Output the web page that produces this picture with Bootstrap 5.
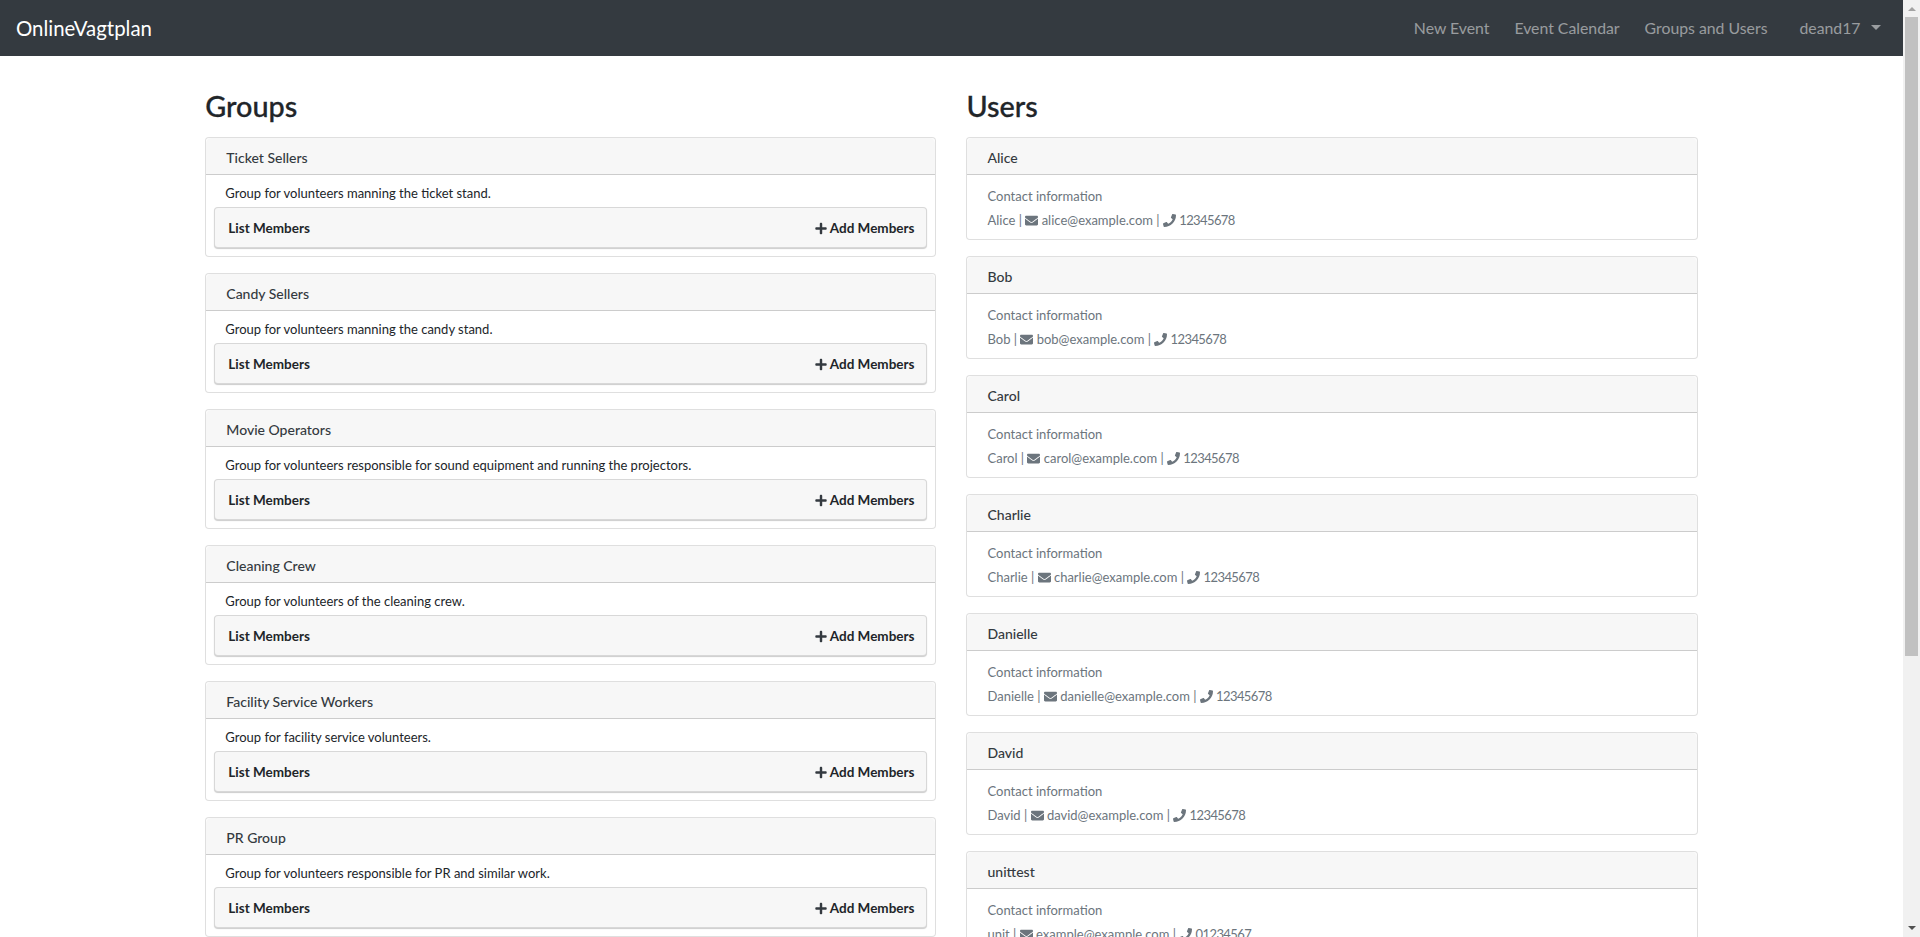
<!DOCTYPE html>
<html lang="en">
<head>
  <meta charset="UTF-8" />
  <meta name="viewport" content="width=device-width, initial-scale=1" />
  <title>OnlineVagtplan - Groups and Users</title>
  <link href="https://cdn.jsdelivr.net/npm/bootstrap@5.3.0/dist/css/bootstrap.min.css" rel="stylesheet" />
  <style>
    body { font-family: "Lato", "Liberation Sans", sans-serif; font-size: 13px; color: #212529; margin-right: 17px; }
    .top-bar { background: #343a40; height: 56px; padding: 0 10px 0 16px; }
    .top-bar .navbar-brand { font-size: 20.4px; color: #fff; padding: 0; margin: 0; }
    .top-bar .navbar-nav .nav-link { font-size: 15.8px; color: rgba(255,255,255,.5); padding: 8px 12.5px; }
    .top-bar .user-menu { margin-left: 7px; }
    .top-bar .user-menu .nav-link { padding-right: 12px; }
    .top-bar .dropdown-toggle::after { margin-left: 10.5px; border-top-width: 5px; border-left-width: 5px; border-right-width: 5px; }
    .page-wrap { width: 80%; margin: 0 auto; padding: 33px 15px 0; }
    .page-cols { --bs-gutter-x: 30px; }
    .page-cols h3 { font-size: 28.8px; font-weight: 500; line-height: 1.2; margin-bottom: 13px; -webkit-text-stroke: .3px #212529; }
    .box { border-color: rgba(0,0,0,.125); border-radius: 4px; margin-bottom: 16px; }
    .box .card-header { padding: 9.5px 20px 5.5px; font-size: 14px; font-weight: 500; line-height: 21px; color: #343a40; background: rgba(0,0,0,.03); }
    .group-body { padding: 8px; }
    .group-body p { margin: 0 0 3px; padding-left: 11px; line-height: 21px; }
    .member-bar { display: flex; justify-content: space-between; align-items: center; height: 41px; padding: 3px 12px 0 13px; font-size: 13.5px; font-weight: 700; color: #212529; background: #f7f7f7; border: 1px solid rgba(0,0,0,.125); border-radius: 4px; box-shadow: 0 1px 1px rgba(0,0,0,.2); }
    .member-bar svg { width: 12px; height: 13px; vertical-align: -2px; fill: #343a40; }
    .user-body { padding: 9px 20px 7px; color: #6c757d; }
    .user-body p { margin: 0; line-height: 24px; }
    .user-body svg { width: 13px; height: 13px; vertical-align: -2px; fill: #6c757d; }
    .phone-no { letter-spacing: -.6px; }
    .fake-scroll { position: fixed; top: 0; right: 0; bottom: 0; width: 17px; background: #f1f1f1; }
    .fake-scroll .thumb { position: absolute; top: 17px; left: 2px; right: 2px; height: 639px; background: #c1c1c1; }
    .fake-scroll .arrow-up, .fake-scroll .arrow-down { position: absolute; left: 5px; width: 0; height: 0; border-left: 4px solid transparent; border-right: 4px solid transparent; }
    .fake-scroll .arrow-up { top: 7px; border-bottom: 4px solid #a3a3a3; }
    .fake-scroll .arrow-down { bottom: 7px; border-top: 4px solid #505050; }
  </style>
</head>
<body>
  <svg class="d-none">
    <symbol id="ic-plus" viewBox="0 0 448 512"><path d="M416 208H272V64c0-17.67-14.33-32-32-32h-32c-17.67 0-32 14.33-32 32v144H32c-17.67 0-32 14.33-32 32v32c0 17.67 14.33 32 32 32h144v144c0 17.67 14.33 32 32 32h32c17.67 0 32-14.33 32-32V304h144c17.67 0 32-14.33 32-32v-32c0-17.67-14.33-32-32-32z"/></symbol>
    <symbol id="ic-mail" viewBox="0 0 512 512"><path d="M502.3 190.8c3.9-3.1 9.7-.2 9.7 4.7V400c0 26.5-21.5 48-48 48H48c-26.5 0-48-21.5-48-48V195.6c0-5 5.7-7.8 9.7-4.7 22.4 17.4 52.1 39.5 154.1 113.6 21.1 15.4 56.7 47.8 92.2 47.6 35.7.3 72-32.8 92.3-47.6 102-74.1 131.6-96.3 154-113.7zM256 320c23.2.4 56.6-29.2 73.4-41.4 132.7-96.3 142.8-104.7 173.4-128.7 5.8-4.5 9.2-11.5 9.2-18.9v-19c0-26.5-21.5-48-48-48H48C21.5 64 0 85.5 0 112v19c0 7.4 3.4 14.3 9.2 18.9 30.6 23.9 40.7 32.4 173.4 128.7 16.8 12.2 50.2 41.8 73.4 41.4z"/></symbol>
    <symbol id="ic-phone" viewBox="0 0 512 512"><path d="M493.4 24.6l-104-24c-11.3-2.6-22.9 3.3-27.5 13.9l-48 112c-4.2 9.8-1.4 21.3 6.9 28l60.6 49.6c-36 76.7-98.9 140.5-177.2 177.2l-49.6-60.6c-6.8-8.3-18.2-11.1-28-6.9l-112 48C3.9 366.5-2 378.1.6 389.4l24 104C27.1 504.2 36.7 512 48 512c256.1 0 464-207.5 464-464 0-11.2-7.7-20.9-18.6-23.4z"/></symbol>
  </svg>

  <nav class="navbar navbar-expand top-bar">
    <a class="navbar-brand" href="#">OnlineVagtplan</a>
    <ul class="navbar-nav ms-auto">
      <li class="nav-item"><a class="nav-link" href="#">New Event</a></li>
      <li class="nav-item"><a class="nav-link" href="#">Event Calendar</a></li>
      <li class="nav-item"><a class="nav-link" href="#">Groups and Users</a></li>
      <li class="nav-item dropdown user-menu"><a class="nav-link dropdown-toggle" href="#" data-bs-toggle="dropdown">deand17</a></li>
    </ul>
  </nav>

  <div class="page-wrap">
    <div class="row page-cols">
      <div class="col-6">
        <h3>Groups</h3>
        <div id="groups"></div>
      </div>
      <div class="col-6">
        <h3>Users</h3>
        <div id="users"></div>
      </div>
    </div>
  </div>

  <div class="fake-scroll"><div class="arrow-up"></div><div class="thumb"></div><div class="arrow-down"></div></div>

  <script>
    const groups = [
      ['Ticket Sellers', 'Group for volunteers manning the ticket stand.'],
      ['Candy Sellers', 'Group for volunteers manning the candy stand.'],
      ['Movie Operators', 'Group for volunteers responsible for sound equipment and running the projectors.'],
      ['Cleaning Crew', 'Group for volunteers of the cleaning crew.'],
      ['Facility Service Workers', 'Group for facility service volunteers.'],
      ['PR Group', 'Group for volunteers responsible for PR and similar work.']
    ];
    const users = [
      ['Alice', 'Alice', 'alice@example.com', '12345678'],
      ['Bob', 'Bob', 'bob@example.com', '12345678'],
      ['Carol', 'Carol', 'carol@example.com', '12345678'],
      ['Charlie', 'Charlie', 'charlie@example.com', '12345678'],
      ['Danielle', 'Danielle', 'danielle@example.com', '12345678'],
      ['David', 'David', 'david@example.com', '12345678'],
      ['unittest', 'unit', 'example@example.com', '01234567']
    ];

    document.getElementById('groups').innerHTML = groups.map(g => `
      <div class="card box">
        <div class="card-header">${g[0]}</div>
        <div class="group-body">
          <p>${g[1]}</p>
          <div class="member-bar">
            <span>List Members</span>
            <span><svg><use href="#ic-plus"/></svg> Add Members</span>
          </div>
        </div>
      </div>`).join('');

    document.getElementById('users').innerHTML = users.map(u => `
      <div class="card box">
        <div class="card-header">${u[0]}</div>
        <div class="user-body">
          <p>Contact information</p>
          <p>${u[1]} | <svg><use href="#ic-mail"/></svg> ${u[2]} | <svg><use href="#ic-phone"/></svg> <span class="phone-no">${u[3]}</span></p>
        </div>
      </div>`).join('');
  </script>
  <script src="https://cdn.jsdelivr.net/npm/bootstrap@5.3.0/dist/js/bootstrap.bundle.min.js"></script>
</body>
</html>
